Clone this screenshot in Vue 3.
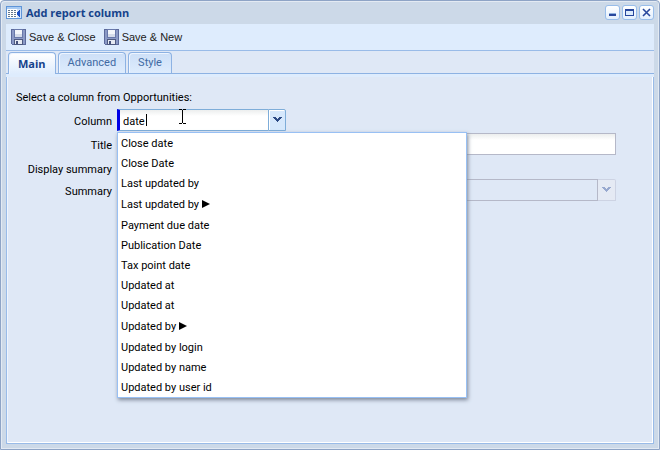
<script setup>
import { ref } from 'vue'

const tabs = ['Main', 'Advanced', 'Style']
const activeTab = ref('Main')
const actions = ['Save & Close', 'Save & New']
const query = ref('date')
const title = ref('')
const showSummary = ref(false)
const options = [
  { text: 'Close date' },
  { text: 'Close Date' },
  { text: 'Last updated by' },
  { text: 'Last updated by', nested: true },
  { text: 'Payment due date' },
  { text: 'Publication Date' },
  { text: 'Tax point date' },
  { text: 'Updated at' },
  { text: 'Updated at' },
  { text: 'Updated by', nested: true },
  { text: 'Updated by login' },
  { text: 'Updated by name' },
  { text: 'Updated by user id' }
]
</script>

<template>
  <section class="window">
    <header class="titlebar">
      <svg class="app-icon" width="16" height="14" viewBox="0 0 16 14" shape-rendering="crispEdges">
        <rect width="16" height="13" fill="#5f95d8" />
        <rect x="1" y="1" width="14" height="2" fill="#a9cbf3" />
        <rect x="1" y="3" width="10" height="9" fill="#fff" />
        <rect x="11" y="3" width="4" height="9" fill="#cfe1fa" />
        <path d="M2 4.500h2M2 6.500h2M2 8.500h2M2 10.500h2M5 4.500h2M5 6.500h2M5 8.500h2M5 10.500h2M8 4.500h2M8 6.500h2M8 8.500h2M8 10.500h2" stroke="#64788f" />
        <path d="M14 4v7h-1v-1h-1V9h-1V6h1V5h1V4z" fill="#1b4fc4" />
      </svg>
      <h1>Add report column</h1>
      <div class="tools">
        <button type="button" class="tool" aria-label="Minimize">
          <svg width="13" height="13" shape-rendering="crispEdges"><rect x="3" y="7" width="7" height="1" fill="#8fb0de" /><rect x="3" y="8" width="7" height="2" fill="#28479c" /></svg>
        </button>
        <button type="button" class="tool" aria-label="Maximize">
          <svg width="13" height="13" shape-rendering="crispEdges"><rect x="2" y="3" width="9" height="7" fill="#28479c" /><rect x="3" y="5" width="7" height="4" fill="#dcebfc" /></svg>
        </button>
        <button type="button" class="tool" aria-label="Close">
          <svg width="13" height="13"><path d="M3 3l7 7M10 3l-7 7" stroke="#28479c" stroke-width="1.600" /></svg>
        </button>
      </div>
    </header>

    <div class="content">
      <div class="toolbar">
        <button v-for="a in actions" :key="a" type="button" class="action">
          <svg width="16" height="16" viewBox="0 0 16 16" shape-rendering="crispEdges">
            <path d="M0 0h15v16H1l-1-1z" fill="#5c6a9b" />
            <path d="M1 1h13v14H1z" fill="#8b9ac6" />
            <path d="M3 0h9v9H3z" fill="#6878aa" />
            <path d="M4 1h7v7H4z" fill="#f3f6fb" />
            <path d="M4 5h7v3H4z" fill="#d5dcea" />
            <path d="M3 10h9v6H3z" fill="#4e5a80" />
            <path d="M4 11h7v4H4z" fill="#e6eaf2" />
            <path d="M5 12h2v3H5z" fill="#46527c" />
          </svg>
          <span>{{ a }}</span>
        </button>
      </div>

      <nav class="tabs" role="tablist">
        <button
          v-for="t in tabs" :key="t" type="button" role="tab" class="tab"
          :class="{ active: t === activeTab }" :aria-selected="t === activeTab"
          @click="activeTab = t"
        >{{ t }}</button>
      </nav>
      <div class="spacer"></div>

      <form class="panel" @submit.prevent>
        <p class="intro">Select a column from Opportunities:</p>
        <div class="row">
          <label for="column">Column</label>
          <div class="combo">
            <input id="column" v-model="query" class="field required" type="text" role="combobox" aria-expanded="true" aria-controls="column-options" autocomplete="off">
            <button type="button" class="trigger" aria-label="Toggle options">
              <svg width="9" height="5" viewBox="0 0 9 5" shape-rendering="crispEdges"><path d="M0 0h3v1h1v1h1V1h1V0h3v1H8v1H7v1H6v1H5v1H4V4H3V3H2V2H1V1H0z" fill="#2c4a85" /></svg>
            </button>
            <svg class="cursor" width="40" height="17" shape-rendering="crispEdges">
              <path d="M.5 5v12" stroke="#000" />
              <path d="M33 .5h3M37 .5h3M36.500 1v13M33 14.500h3M37 14.500h3" stroke="#000" />
            </svg>
            <ul id="column-options" class="options" role="listbox">
              <li v-for="(o, i) in options" :key="i" role="option" :class="{ nested: o.nested }">
                {{ o.text }}
                <svg v-if="o.nested" width="8" height="8" viewBox="0 0 8 8"><path d="M0 0l8 4-8 4z" fill="#000" /></svg>
              </li>
            </ul>
          </div>
        </div>
        <div class="row">
          <label for="title">Title</label>
          <input id="title" v-model="title" class="field wide" type="text">
        </div>
        <div class="row check">
          <label for="display">Display summary</label>
          <input id="display" v-model="showSummary" type="checkbox">
        </div>
        <div class="row">
          <label for="summary">Summary</label>
          <div class="select-wrap">
            <select id="summary" class="field wide" disabled><option></option></select>
            <span class="trigger off">
              <svg width="9" height="5" viewBox="0 0 9 5" shape-rendering="crispEdges"><path d="M0 0h3v1h1v1h1V1h1V0h3v1H8v1H7v1H6v1H5v1H4V4H3V3H2V2H1V1H0z" fill="#98a9cf" /></svg>
            </span>
          </div>
        </div>
      </form>
    </div>
  </section>
</template>

<style>
body { margin: 0; }
</style>

<style scoped>
* { box-sizing: border-box; }
.window {
  min-height: 100vh;
  display: flex;
  flex-direction: column;
  padding: 0 5px 5px;
  border: 1px solid #8ea4c6;
  border-radius: 4px 4px 0 0;
  background: #ccd9e8;
  box-shadow: inset 1px 1px #e3eaf3, inset -1px -1px #e3eaf3;
  font: 11px/16px Roboto, "Open Sans", sans-serif;
  color: #000;
}
button { font: inherit; padding: 0; margin: 0; }
.titlebar { height: 23px; display: flex; align-items: center; }
.titlebar h1 { flex: 1; margin: 0 0 0 4px; font: 700 11px/16px "Open Sans", sans-serif; color: #15428b; }
.tools { display: flex; gap: 2px; }
.tool { width: 15px; height: 15px; display: flex; border: 1px solid #98bdea; border-radius: 3px; background: linear-gradient(#fff, #e3effd); }
.content { flex: 1; display: flex; flex-direction: column; background: #deecfd; }
.toolbar { height: 27px; display: flex; gap: 8px; padding: 0 5px; align-items: center; border-bottom: 1px solid #99bbe8; }
.action { display: flex; align-items: center; gap: 2px; border: 0; background: none; color: #222; font: 11px/16px "Liberation Sans", sans-serif; }
.tabs { height: 23px; display: flex; gap: 2px; padding: 1px 2px 0; background: #dfe8f6; border-bottom: 1px solid #8db2e3; }
.tab { height: 21px; padding: 0 9px; border: 1px solid #8db2e3; border-bottom: 0; border-radius: 4px 4px 0 0; background: linear-gradient(#cddff7, #deecfd); color: #416aa3; line-height: 20px; box-shadow: inset 1px 1px #eef5ff; }
.tab.active { height: 22px; background: linear-gradient(#fff, #deecfd); color: #15428b; font: 700 11px/20px "Open Sans", sans-serif; }
.spacer { height: 3px; }
.panel { flex: 1; padding: 13px 37px 12px 9px; border: 1px solid #99bbe8; border-top: 0; background: #dfe8f6; box-shadow: inset 1px 0 #eef5ff, inset -1px -1px #fff; }
.intro { margin: 0 0 3px; }
.row { display: flex; height: 22px; margin-bottom: 2px; }
.row label { width: 96px; margin-right: 5px; line-height: 26px; text-align: right; white-space: nowrap; }
.row.check { height: 20px; }
.check input { width: 13px; height: 13px; margin: 4px 0; }
.field { height: 22px; margin: 0; padding: 2px 3px 0; border: 1px solid #b5b8c8; border-radius: 0; outline: none; background: linear-gradient(#eceeee, #fff 6px); color: #000; font: inherit; }
.combo { position: relative; display: flex; }
.combo .field { width: 151px; border-color: #7eadd9; border-right: 0; }
.combo .required { border-left: 3px solid #0000e6; }
.wide { flex: 1; min-width: 0; }
.trigger { width: 18px; height: 22px; display: flex; align-items: center; justify-content: center; border: 1px solid #7eadd9; border-radius: 0 2px 0 0; background: #d6e8fc; box-shadow: inset 1px 1px #fff; }
.trigger svg { margin-bottom: 2px; }
.select-wrap { flex: 1; display: flex; }
select.field { appearance: none; background: #dfe8f6; opacity: 1; }
.trigger.off { border-color: #cdd3e3; background: #e5eaf4; box-shadow: none; border-left: 0; }
.cursor { position: absolute; left: 29px; top: 0; }
.options { position: absolute; z-index: 1; top: 23px; left: 0; width: 350px; margin: 0; padding: 0; list-style: none; border: 1px solid #98c0f4; background: #fff; box-shadow: 1px 2px 4px #7d8798; }
.options li { height: 20px; padding: 0 3px; line-height: 22px; }
.options .nested { height: 22px; line-height: 24px; }
</style>
